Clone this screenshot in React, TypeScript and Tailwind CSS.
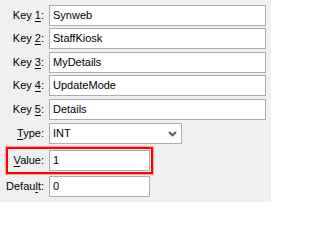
import React from "react";

const font = { fontFamily: '"Liberation Sans", Arial, sans-serif' };

function Label({ pre, u, post }: { pre: string; u: string; post: string }) {
  return (
    <div className="w-[44px] shrink-0 text-right pr-[0px] whitespace-nowrap">
      {pre}
      <span className="underline underline-offset-[2px] decoration-[1px]">{u}</span>
      {post}
    </div>
  );
}

function Box({ value, w }: { value: string; w: string }) {
  return (
    <div
      className={`${w} h-[21px] ml-[5px] bg-white border border-[#adadad] flex items-center pl-[3px] leading-none`}
    >
      {value}
    </div>
  );
}

export default function App() {
  return (
    <div
      className="relative w-[271px] h-[202px] bg-[#f0f0f0] text-[11px] text-black overflow-hidden"
      style={font}
    >
      <div className="flex flex-col pt-[5px]">
        <div className="flex items-center">
          <Label pre="Key " u="1" post=":" />
          <Box value="Synweb" w="w-[217px]" />
        </div>
        <div className="flex items-center mt-[2px]">
          <Label pre="Key " u="2" post=":" />
          <Box value="StaffKiosk" w="w-[217px]" />
        </div>
        <div className="flex items-center mt-[3px]">
          <Label pre="Key " u="3" post=":" />
          <Box value="MyDetails" w="w-[217px]" />
        </div>
        <div className="flex items-center mt-[2px]">
          <Label pre="Key " u="4" post=":" />
          <Box value="UpdateMode" w="w-[217px]" />
        </div>
        <div className="flex items-center mt-[3px]">
          <Label pre="Key " u="5" post=":" />
          <Box value="Details" w="w-[217px]" />
        </div>
        <div className="flex items-center mt-[3px]">
          <Label pre="" u="T" post="ype:" />
          <div className="w-[133px] h-[21px] ml-[5px] bg-white border border-[#adadad] flex items-center pl-[3px] pr-[4px] justify-between leading-none">
            <span>INT</span>
            <svg width="9" height="6" viewBox="0 0 9 6" className="mt-[1px]">
              <path d="M1 1 L4.5 4.5 L8 1" fill="none" stroke="#5a5a5a" strokeWidth="1.8" />
            </svg>
          </div>
        </div>
        <div className="flex items-center mt-[6px]">
          <Label pre="" u="V" post="alue:" />
          <Box value="1" w="w-[101px]" />
        </div>
        <div className="flex items-center mt-[5px]">
          <Label pre="Defau" u="l" post="t:" />
          <Box value="0" w="w-[101px]" />
        </div>
      </div>
      <div className="absolute left-[6px] top-[147px] w-[147px] h-[27px] border-2 border-[#ff0000] shadow-[0_0_1px_1px_rgba(255,120,120,0.6)] pointer-events-none" />
    </div>
  );
}
